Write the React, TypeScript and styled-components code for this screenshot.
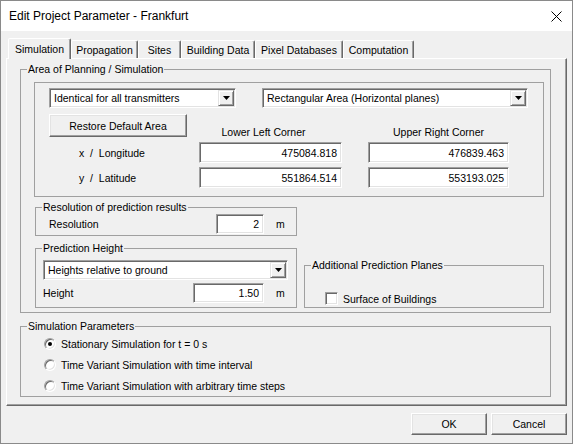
import React from 'react';
import styled, { createGlobalStyle } from 'styled-components';

const GlobalStyle = createGlobalStyle`
  html, body {
    margin: 0;
    padding: 0;
    background: #ffffff;
  }
  body {
    font-family: "Liberation Sans", Arial, sans-serif;
    color: #000;
  }
  * {
    box-sizing: border-box;
  }
`;

const Window = styled.div`
  width: 573px;
  height: 444px;
  border: 1px solid #8a8a8a;
  background: #f0f0f0;
  display: flex;
  flex-direction: column;
  font-size: 10.5px;
  overflow: hidden;
`;

const TitleBar = styled.div`
  height: 30px;
  flex-shrink: 0;
  background: #ffffff;
  display: flex;
  align-items: center;
  padding-left: 8px;
  font-size: 12px;
`;

const CloseIcon = styled.svg`
  margin-left: auto;
  margin-right: 10px;
`;

const Body = styled.div`
  display: flex;
  flex-direction: column;
  padding: 7px 5px 0 5px;
`;

const TabRow = styled.div`
  display: flex;
  align-items: flex-end;
  height: 20px;
  padding-left: 2px;
`;

const Tab = styled.div<{ $active?: boolean; $w: number }>`
  position: relative;
  z-index: ${p => (p.$active ? 2 : 1)};
  width: ${p => p.$w}px;
  height: ${p => (p.$active ? 21 : 18)}px;
  margin-bottom: ${p => (p.$active ? -1 : 0)}px;
  display: flex;
  align-items: center;
  justify-content: center;
  white-space: nowrap;
  background: #f0f0f0;
  border-style: solid;
  border-width: 1px 1px 0 1px;
  border-color: #ffffff #696969 transparent #ffffff;
  box-shadow: inset -1px 0 0 #a0a0a0;
  border-radius: 2px 2px 0 0;
`;

const Panel = styled.div`
  width: 561px;
  height: 348px;
  border-style: solid;
  border-width: 1px;
  border-color: #ffffff #696969 #696969 #ffffff;
  box-shadow: inset -1px -1px 0 #a0a0a0;
  padding: 4px 0 0 13px;
  display: flex;
  flex-direction: column;
`;

// the legend sits inside the padding box, so pull it back by the left padding
const GroupBox = styled.fieldset<{ $w: number; $pad: string; $pl: number }>`
  margin: 0;
  min-width: 0;
  width: ${p => p.$w}px;
  border: 1px solid #a0a0a0;
  padding: ${p => p.$pad};
  padding-left: ${p => p.$pl}px;
  & > legend {
    margin-left: ${p => 6 - p.$pl}px;
  }
`;

const Legend = styled.legend`
  padding: 0 1px;
  line-height: 13px;
  font-size: 10.5px;
  white-space: nowrap;
`;

const InnerBox = styled.div`
  width: 510px;
  border: 1px solid #a0a0a0;
  padding: 5px 0 8px 14px;
  display: flex;
  flex-direction: column;
`;

const ComboRow = styled.div`
  display: flex;
  gap: 26px;
`;

const Combo = styled.div<{ $w: number; $h?: number }>`
  width: ${p => p.$w}px;
  height: ${p => p.$h ?? 20}px;
  background: #ffffff;
  border: 1px solid;
  border-color: #a0a0a0 #ffffff #ffffff #a0a0a0;
  box-shadow: inset 1px 1px 0 #696969, inset -1px -1px 0 #e3e3e3;
  display: flex;
  align-items: center;
  padding: 1px 1px 1px 4px;
`;

const ComboText = styled.span`
  flex: 1;
  white-space: nowrap;
  overflow: hidden;
`;

const DropButton = styled.div`
  width: 16px;
  align-self: stretch;
  background: #f0f0f0;
  border: 1px solid;
  border-color: #e3e3e3 #696969 #696969 #e3e3e3;
  box-shadow: inset 1px 1px 0 #ffffff, inset -1px -1px 0 #a0a0a0;
  display: flex;
  align-items: center;
  justify-content: center;
`;

const ButtonRow = styled.div`
  display: flex;
  align-items: flex-end;
  margin-top: 6px;
`;

const PushButton = styled.div<{ $w: number }>`
  width: ${p => p.$w}px;
  height: 23px;
  background: #f0f0f0;
  border: 1px solid;
  border-color: #ffffff #696969 #696969 #ffffff;
  box-shadow: inset -1px -1px 0 #a0a0a0, inset 1px 1px 0 #e3e3e3;
  display: flex;
  align-items: center;
  justify-content: center;
  white-space: nowrap;
`;

const ColumnHeader = styled.div<{ $w: number; $ml: number; $shift?: number }>`
  width: ${p => p.$w}px;
  margin-left: ${p => p.$ml}px;
  padding-right: ${p => p.$shift ?? 0}px;
  margin-bottom: -2px;
  text-align: center;
  white-space: nowrap;
  line-height: 13px;
`;

const CoordRow = styled.div<{ $mt: number }>`
  display: flex;
  align-items: center;
  margin-top: ${p => p.$mt}px;
`;

const CoordLabel = styled.div`
  width: 150px;
  padding-left: 30px;
  white-space: pre;
`;

const Field = styled.div<{ $w: number; $ml?: number; $h?: number }>`
  width: ${p => p.$w}px;
  height: ${p => p.$h ?? 21}px;
  margin-left: ${p => p.$ml ?? 0}px;
  background: #ffffff;
  border: 1px solid;
  border-color: #a0a0a0 #ffffff #ffffff #a0a0a0;
  box-shadow: inset 1px 1px 0 #696969, inset -1px -1px 0 #e3e3e3;
  display: flex;
  align-items: center;
  justify-content: flex-end;
  padding-right: 4px;
  white-space: nowrap;
`;

const LowerRow = styled.div`
  display: flex;
  align-items: flex-end;
  gap: 7px;
  margin-top: 4px;
  margin-left: 1px;
`;

const LeftColumn = styled.div`
  display: flex;
  flex-direction: column;
  gap: 6px;
`;

const ValueRow = styled.div<{ $mt?: number }>`
  display: flex;
  align-items: center;
  margin-top: ${p => p.$mt ?? 0}px;
`;

const ValueLabel = styled.div`
  flex: 1;
  white-space: nowrap;
`;

const Unit = styled.div`
  width: 32px;
  padding-left: 12px;
`;

const CheckRow = styled.label`
  display: flex;
  align-items: center;
  height: 15px;
  gap: 5px;
`;

const CheckBox = styled.span`
  width: 13px;
  height: 13px;
  background: #ffffff;
  border: 1px solid;
  border-color: #a0a0a0 #ffffff #ffffff #a0a0a0;
  box-shadow: inset 1px 1px 0 #696969, inset -1px -1px 0 #e3e3e3;
`;

const SimGroup = styled(GroupBox)`
  margin-top: 7px;
`;

const RadioRow = styled.div`
  display: flex;
  align-items: center;
  height: 21px;
  gap: 5px;
  white-space: nowrap;
`;

const Radio = styled.span<{ $checked?: boolean }>`
  width: 12px;
  height: 12px;
  border-radius: 50%;
  background: #ffffff;
  border: 1px solid;
  border-color: #a0a0a0 #ffffff #ffffff #a0a0a0;
  box-shadow: inset 1px 1px 0 #696969, inset -1px -1px 0 #e3e3e3;
  display: flex;
  align-items: center;
  justify-content: center;
  &::after {
    content: '';
    display: ${p => (p.$checked ? 'block' : 'none')};
    width: 4px;
    height: 4px;
    border-radius: 50%;
    background: #000;
  }
`;

const Footer = styled.div`
  display: flex;
  justify-content: flex-end;
  gap: 4px;
  padding-top: 7px;
`;

const DialogButton = styled(PushButton)`
  height: 22px;
`;

const tabs = [
  { label: 'Simulation', w: 63 },
  { label: 'Propagation', w: 67 },
  { label: 'Sites', w: 43 },
  { label: 'Building Data', w: 74 },
  { label: 'Pixel Databases', w: 88 },
  { label: 'Computation', w: 71 },
];

const radios = [
  'Stationary Simulation for t = 0 s',
  'Time Variant Simulation with time interval',
  'Time Variant Simulation with arbitrary time steps',
];

const Arrow = () => (
  <svg width="7" height="4" viewBox="0 0 7 4">
    <path d="M0 0 H7 L3.5 4 Z" fill="#000" />
  </svg>
);

const App = () => {
  return (
    <>
      <GlobalStyle />
      <Window>
        <TitleBar>
          Edit Project Parameter - Frankfurt
          <CloseIcon width="11" height="11" viewBox="0 0 11 11">
            <path d="M0.5 0.5 L10.5 10.5 M10.5 0.5 L0.5 10.5" stroke="#000" strokeWidth="1" />
          </CloseIcon>
        </TitleBar>
        <Body>
          <TabRow>
            {tabs.map((t, i) => (
              <Tab key={t.label} $w={t.w} $active={i === 0}>
                {t.label}
              </Tab>
            ))}
          </TabRow>
          <Panel>
            <GroupBox $w={531} $pad="6px 0 4px" $pl={13}>
              <Legend>Area of Planning / Simulation</Legend>
              <InnerBox>
                <ComboRow>
                  <Combo $w={187}>
                    <ComboText>Identical for all transmitters</ComboText>
                    <DropButton>
                      <Arrow />
                    </DropButton>
                  </Combo>
                  <Combo $w={266}>
                    <ComboText>Rectangular Area (Horizontal planes)</ComboText>
                    <DropButton>
                      <Arrow />
                    </DropButton>
                  </Combo>
                </ComboRow>
                <ButtonRow>
                  <PushButton $w={138}>Restore Default Area</PushButton>
                  <ColumnHeader $w={143} $ml={12} $shift={14}>
                    Lower Left Corner
                  </ColumnHeader>
                  <ColumnHeader $w={141} $ml={26}>
                    Upper Right Corner
                  </ColumnHeader>
                </ButtonRow>
                <CoordRow $mt={5}>
                  <CoordLabel>{'x  /  Longitude'}</CoordLabel>
                  <Field $w={143}>475084.818</Field>
                  <Field $w={141} $ml={26}>
                    476839.463
                  </Field>
                </CoordRow>
                <CoordRow $mt={4}>
                  <CoordLabel>{'y  /  Latitude'}</CoordLabel>
                  <Field $w={143}>551864.514</Field>
                  <Field $w={141} $ml={26}>
                    553193.025
                  </Field>
                </CoordRow>
              </InnerBox>
              <LowerRow>
                <LeftColumn>
                  <GroupBox $w={262} $pad="0 0 1px" $pl={13}>
                    <Legend>Resolution of prediction results</Legend>
                    <ValueRow>
                      <ValueLabel>Resolution</ValueLabel>
                      <Field $w={48} $h={20}>
                        2
                      </Field>
                      <Unit>m</Unit>
                    </ValueRow>
                  </GroupBox>
                  <GroupBox $w={262} $pad="5px 0 4px" $pl={7}>
                    <Legend>Prediction Height</Legend>
                    <Combo $w={245} $h={20}>
                      <ComboText>Heights relative to ground</ComboText>
                      <DropButton>
                        <Arrow />
                      </DropButton>
                    </Combo>
                    <ValueRow $mt={3}>
                      <ValueLabel>Height</ValueLabel>
                      <Field $w={71} $h={20}>
                        1.50
                      </Field>
                      <Unit>m</Unit>
                    </ValueRow>
                  </GroupBox>
                </LeftColumn>
                <GroupBox $w={240} $pad="19px 0 1px" $pl={20}>
                  <Legend>Additional Prediction Planes</Legend>
                  <CheckRow>
                    <CheckBox />
                    Surface of Buildings
                  </CheckRow>
                </GroupBox>
              </LowerRow>
            </GroupBox>
            <SimGroup $w={531} $pad="0 0 0" $pl={23}>
              <Legend>Simulation Parameters</Legend>
              {radios.map((r, i) => (
                <RadioRow key={r}>
                  <Radio $checked={i === 0} />
                  {r}
                </RadioRow>
              ))}
            </SimGroup>
          </Panel>
          <Footer>
            <DialogButton $w={76}>OK</DialogButton>
            <DialogButton $w={76}>Cancel</DialogButton>
          </Footer>
        </Body>
      </Window>
    </>
  );
};

export default App;
